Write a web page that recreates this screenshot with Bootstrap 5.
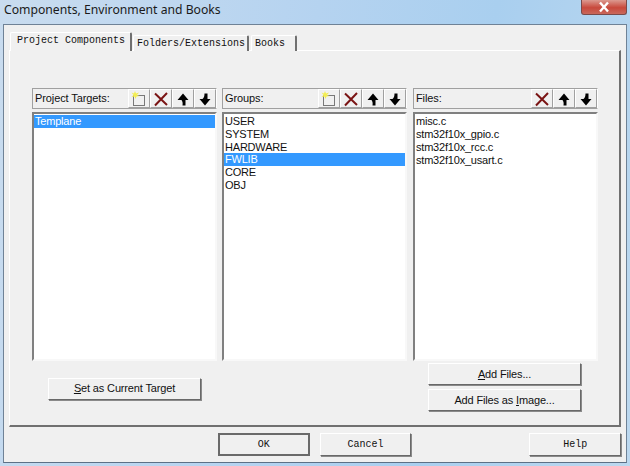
<!DOCTYPE html>
<html lang="en">
<head>
    <meta charset="UTF-8">
    <title>Components, Environment and Books</title>
    <link href="https://cdn.jsdelivr.net/npm/bootstrap@5.3.0/dist/css/bootstrap.min.css" rel="stylesheet">
    <style>
        html, body { height: 466px; overflow: hidden; }
        body { background: linear-gradient(100deg, #c9dcef 0%, #b5d3f0 45%, #a9cfef 70%, #bcd8ef 100%); font-family: "Liberation Sans", Arial, sans-serif; color: #111; }
        .win-title { height: 24px; padding: 1px 3px 0 4px; font-family: "Noto Sans", sans-serif; font-size: 12.2px; line-height: 17px; color: #1a1a1a; }
        .win-close { width: 46px; height: 15px; margin-top: -1px; border: 1px solid #7a4a4a; border-top: 0; border-radius: 0 0 3px 3px; background: linear-gradient(#dc9a90, #c8493c 55%, #c9685c); }
        .win-close svg { display: block; width: 12px; height: 12px; margin: 1px auto 0; }
        .win-client { height: 439px; margin: 0 3px; background: #f0f0f0; border: 1px solid #6f8296; border-bottom-color: #5c7086; padding: 7px 5px 0 5px; }
        .tab-strip { height: 18px; align-items: flex-end; border: 0; padding-left: 1px; }
        .tab-strip .nav-link { font-family: "Liberation Mono", monospace; font-size: 10px; line-height: 14px; white-space: nowrap; color: #111; background: #f0f0f0; border: 0; border-top: 1px solid #fff; border-left: 1px solid #fff; border-right: 2px solid #707070; border-radius: 2px 2px 0 0; padding: 1px 3px 0 3px; height: 16px; margin-right: 2px; }
        .tab-strip .nav-link.active { height: 19px; padding: 1px 4px 0 6px; margin-right: 1px; margin-bottom: -1px; position: relative; z-index: 1; background: #f0f0f0; color: #111; border-color: #fff #707070 #f0f0f0 #fff; }
        .tab-one { width: 122px; }
        .tab-two { width: 116px; }
        .tab-three { width: 46px; }
        .tab-page { height: 377px; border-top: 1px solid #fff; border-left: 1px solid #fff; border-right: 2px solid #707070; border-bottom: 2px solid #707070; padding: 37px 0 0 22px; }
        .pane-row { gap: 5px; }
        .pane-col { width: 185px; }
        .pane-col.pane-last { margin-left: 1px; }
        .pane-head { height: 21px; border: 1px solid #a0a0a0; border-right-color: #fff; font-size: 11px; letter-spacing: -0.1px; padding-left: 2px; }
        .tool-btn { width: 22px; height: 19px; padding: 0; border: 1px solid; border-color: #fff #a0a0a0 #a0a0a0 #fff; border-radius: 0; background: #f0f0f0; }
        .tool-btn svg { display: block; width: 16px; height: 16px; }
        .pane-list { height: 249px; margin-top: 3px; border: 2px solid; border-color: #808080 #f8f8f8 #f8f8f8 #808080; background: #fff; border-radius: 0; padding: 1px 0 0 0; }
        .pane-list .list-group-item { border: 0; padding: 0 0 0 1px; background: transparent; font-size: 11px; letter-spacing: -0.2px; line-height: 13px; color: #111; border-radius: 0; }
        .pane-list .list-group-item.active { background: #3399ff; color: #fff; }
        .dlg-btn { height: 22px; padding: 0; border: 1px solid; border-color: #fff #696969 #696969 #fff; border-radius: 0; box-shadow: 1px 1px 0 #8a8a8a; background: #f0f0f0; font-size: 11px; letter-spacing: -0.15px; line-height: 19px; color: #111; }
        .dlg-wide { width: 153px; }
        .action-row { margin-top: 2px; }
        .left-action { margin: 13px 0 0 16px; }
        .right-actions { margin-left: 227px; gap: 4px; }
        .foot-row { margin-top: 6px; padding-left: 209px; }
        .foot-btn { width: 92px; height: 23px; font-family: "Liberation Mono", monospace; font-size: 10px; letter-spacing: 0; }
        .foot-default { border: 2px solid #6a6a6a; box-shadow: none; }
        .foot-gap { margin-left: 10px; }
        .foot-help { margin-left: 118px; }
    </style>
</head>
<body>

    <div class="win-title d-flex justify-content-between">
        <span>Components, Environment and Books</span>
        <span class="win-close"><svg viewBox="0 0 12 12"><path d="M2 1.5 10 10.5M10 1.5 2 10.5" stroke="#fff" stroke-width="2.4" fill="none"/></svg></span>
    </div>

    <div class="win-client">
        <ul class="nav nav-tabs tab-strip">
            <li class="nav-item"><a class="nav-link active tab-one" href="#">Project Components</a></li>
            <li class="nav-item"><a class="nav-link tab-two" href="#">Folders/Extensions</a></li>
            <li class="nav-item"><a class="nav-link tab-three" href="#">Books</a></li>
        </ul>

        <div class="tab-page">
            <div class="d-flex pane-row" id="panes"></div>

            <div class="d-flex action-row">
                <div class="left-action">
                    <button class="btn dlg-btn dlg-wide"><u>S</u>et as Current Target</button>
                </div>
                <div class="d-flex flex-column right-actions">
                    <button class="btn dlg-btn dlg-wide"><u>A</u>dd Files...</button>
                    <button class="btn dlg-btn dlg-wide">Add Files as <u>I</u>mage...</button>
                </div>
            </div>
        </div>

        <div class="d-flex foot-row">
            <button class="btn dlg-btn foot-btn foot-default">OK</button>
            <button class="btn dlg-btn foot-btn foot-gap">Cancel</button>
            <button class="btn dlg-btn foot-btn foot-help">Help</button>
        </div>
    </div>

    <script>
        const icons = {
            add: '<svg viewBox="0 0 16 16"><rect x="2.5" y="4.5" width="11" height="10" fill="#f0f0f0" stroke="#000" stroke-dasharray="1 1"/><path d="M4 0 5 2.5 8 1.5 6 4 8.5 5 5.5 5.5 4.5 8 3.5 5.5 0.5 6 2.5 4 0.5 1.5 3 2.5Z" fill="#f4ee50"/></svg>',
            del: '<svg viewBox="0 0 16 16"><path d="M2 2.5 14 14M14 2 2 14.5" stroke="#7a1414" stroke-width="2" fill="none"/></svg>',
            up: '<svg viewBox="0 0 16 16"><path d="M8 2.5 13.5 9H10.5V14.5H7.5C7.9 12 7.6 10.5 6.5 9H2.5Z" fill="#000"/></svg>',
            down: '<svg viewBox="0 0 16 16"><path d="M8 14.5 2.5 8H5.5C7 7 7.5 5 7.5 2.5H10.5V8H13.5Z" fill="#000"/></svg>'
        };

        const panes = [
            { label: 'Project Targets:', tools: ['add', 'del', 'up', 'down'], items: ['Templane'], active: 0 },
            { label: 'Groups:', tools: ['add', 'del', 'up', 'down'], items: ['USER', 'SYSTEM', 'HARDWARE', 'FWLIB', 'CORE', 'OBJ'], active: 3 },
            { label: 'Files:', tools: ['del', 'up', 'down'], items: ['misc.c', 'stm32f10x_gpio.c', 'stm32f10x_rcc.c', 'stm32f10x_usart.c'], active: -1 }
        ];

        const row = document.getElementById('panes');
        panes.forEach((p, i) => {
            const tools = p.tools.map(t => `<button class="btn tool-btn d-flex align-items-center justify-content-center">${icons[t]}</button>`).join('');
            const items = p.items.map((it, n) => `<li class="list-group-item${n === p.active ? ' active' : ''}">${it}</li>`).join('');
            row.innerHTML += `
                <div class="pane-col${i === 2 ? ' pane-last' : ''}">
                    <div class="pane-head d-flex align-items-center justify-content-between">
                        <span>${p.label}</span>
                        <div class="d-flex">${tools}</div>
                    </div>
                    <ul class="list-group pane-list">${items}</ul>
                </div>`;
        });
    </script>

</body>
</html>
